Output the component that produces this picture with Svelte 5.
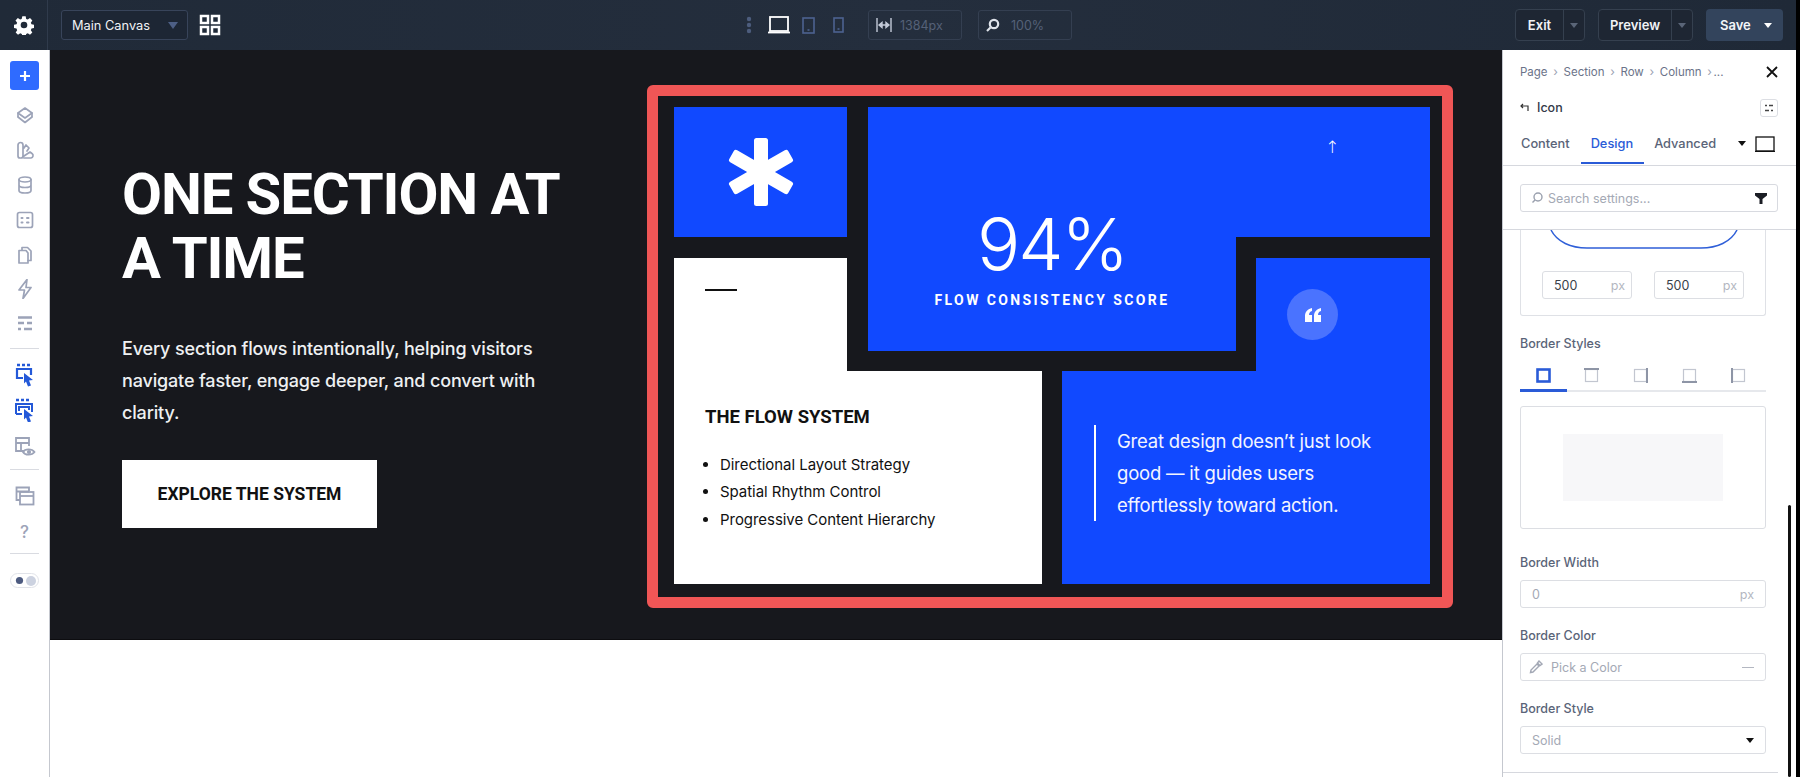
<script>
  const sideTop = ['layers', 'brush', 'db', 'form', 'copy', 'bolt', 'rows'];
  const listItems = ['Directional Layout Strategy', 'Spatial Rhythm Control', 'Progressive Content Hierarchy'];
  const borderTabs = ['all', 'top', 'right', 'bottom', 'left'];
</script>

<div class="app">
  <header class="topbar">
    <div class="gearcell">
      <svg width="20" height="20" viewBox="0 0 24 24" fill="#fff"><path fill-rule="evenodd" d="M10 1.500h4l.6 3.200 1.900.8 2.700-1.800 2.800 2.800-1.800 2.700.8 1.900 3.200.6v4l-3.200.6-.8 1.900 1.800 2.700-2.800 2.800-2.700-1.800-1.900.8-.6 3.200h-4l-.6-3.200-1.900-.8-2.700 1.800-2.800-2.800 1.800-2.700-.8-1.900-3.200-.6v-4l3.200-.6.8-1.900L1.800 6.500l2.800-2.800 2.700 1.800 1.900-.8zM12 8a4 4 0 1 0 0 8 4 4 0 0 0 0-8z"/></svg>
    </div>
    <div class="left">
      <div class="select"><span>Main Canvas</span><i class="tri"></i></div>
      <svg class="gridicon" width="22" height="22" viewBox="0 0 22 22" fill="none" stroke="#fff" stroke-width="2.500"><rect x="2" y="2" width="7" height="7"/><rect x="13" y="2" width="7" height="7"/><rect x="2" y="13" width="7" height="7"/><rect x="13" y="13" width="7" height="7"/></svg>
    </div>
    <div class="center">
      <svg class="dots" width="6" height="18" viewBox="0 0 6 18" fill="#4d5d7d"><circle cx="3" cy="3" r="2.200"/><circle cx="3" cy="9" r="2.200"/><circle cx="3" cy="15" r="2.200"/></svg>
      <svg width="22" height="18" viewBox="0 0 22 18" fill="none" stroke="#fff" stroke-width="1.800"><rect x="2" y="1" width="18" height="14"/><path d="M0 16.500h22"/></svg>
      <svg class="tablet" width="13" height="17" viewBox="0 0 13 17" fill="none" stroke="#4d6290" stroke-width="1.600"><rect x="1" y="1" width="11" height="15"/><path d="M5.500 13h2"/></svg>
      <svg class="phone" width="11" height="16" viewBox="0 0 11 16" fill="none" stroke="#4d6290" stroke-width="1.600"><rect x="1" y="1" width="9" height="14"/><path d="M4.500 12h2"/></svg>
      <div class="metric width">
        <svg width="16" height="14" viewBox="0 0 16 14" fill="none" stroke="#c3cad8" stroke-width="1.400"><path d="M1 0v14M15 0v14M3 7h10"/><path d="M3 7l3-2.500v5zM13 7l-3-2.500v5z" fill="#c3cad8"/></svg>
        <span>1384px</span>
      </div>
      <div class="metric zoom">
        <svg width="14" height="14" viewBox="0 0 14 14" fill="none" stroke="#dfe3ea" stroke-width="2.200"><circle cx="8" cy="6" r="4.200"/><path d="M4.500 9.500L1 13"/></svg>
        <span>100%</span>
      </div>
    </div>
    <div class="right">
      <div class="split exit"><span class="label">Exit</span><span class="arrow"><i class="tri small"></i></span></div>
      <div class="split preview"><span class="label">Preview</span><span class="arrow"><i class="tri small"></i></span></div>
      <div class="save"><span>Save</span><i class="tri small white"></i></div>
    </div>
  </header>

  <div class="body">
    <nav class="sidebar">
      <button class="add" aria-label="Add">
        <svg width="12" height="12" viewBox="0 0 12 12" stroke="#fff" stroke-width="2.200"><path d="M6 1v10M1 6h10"/></svg>
      </button>
      <div class="group first">
        {#each sideTop as icon}
          <svg class="sideicon" width="20" height="20" viewBox="0 0 20 20" fill="none" stroke="#9ca3b8" stroke-width="1.700" stroke-linejoin="round" stroke-linecap="round">
            {#if icon === 'layers'}
              <path d="M10 2l7 5-7 5-7-5zM3 11l7 5.500 7-5.500"/>
              <path d="M3 7v3.500M17 7v3.500"/>
            {:else if icon === 'brush'}
              <path d="M3 5a2.500 2.500 0 0 1 5 0v11a2 2 0 0 1-2 2H5a2 2 0 0 1-2-2zM9 8l2-3 3 3-2 3M9 18h7a2.500 2.500 0 0 0 1-4.500l-2-1.500-6 4"/>
            {:else if icon === 'db'}
              <ellipse cx="10" cy="4.500" rx="6" ry="2.500"/>
              <path d="M4 4.500v11c0 1.400 2.700 2.500 6 2.500s6-1.100 6-2.500v-11M4 10c0 1.400 2.700 2.500 6 2.500s6-1.100 6-2.500"/>
            {:else if icon === 'form'}
              <rect x="2.500" y="2.500" width="15" height="15" rx="2"/>
              <path d="M6.500 8h1M12 8h1.500M6.500 12.500h1M12 12.500h1.500" stroke-width="2"/>
            {:else if icon === 'copy'}
              <path d="M7 5V2.500h5.500L16 6v9.500h-3"/>
              <path d="M4 5.500h7l2 2.500v10H4z"/>
            {:else if icon === 'bolt'}
              <path d="M12 .5L4 11h5.500L8 19.500l8-11h-5z"/>
            {:else}
              <path d="M3 3.500h14M3 9h6M12 9h5M3 15h3M9 15h8" stroke-width="2.400" stroke-linecap="butt"/>
            {/if}
          </svg>
        {/each}
      </div>
      <hr />
      <div class="group tools">
        <svg width="20" height="24" viewBox="0 0 20 24" fill="none"><path d="M2 2h3M7 2h3M12 2h3" stroke="#2459d8" stroke-width="2.400"/><path d="M2 14V6h14v6M2 14v1h6" stroke="#2459d8" stroke-width="2.200"/><path d="M9 10l9 7-4 .5 2 5-3 1-2-5-2 2z" fill="#2459d8"/></svg>
        <svg width="22" height="24" viewBox="0 0 22 24" fill="none"><path d="M2 2h3M7 2h3M12 2h3" stroke="#2459d8" stroke-width="2.400"/><path d="M2 16V6h16v8M5 13V9h10v3M2 16h6" stroke="#2459d8" stroke-width="2"/><path d="M10 11l9 7-4 .5 2 5-3 1-2-5-2 2z" fill="#2459d8"/></svg>
        <svg class="eye" width="22" height="22" viewBox="0 0 22 22" fill="none" stroke="#9ca3b8" stroke-width="1.800"><path d="M10 15H2V2h13v8M2 7h13M7 7v8"/><path d="M9 16c2-3.500 9-3.500 11.500 0-2.500 3.500-9.500 3.500-11.500 0z"/><circle cx="15" cy="16" r="1.200" fill="#9ca3b8"/></svg>
      </div>
      <hr />
      <div class="group tools2">
        <svg width="20" height="20" viewBox="0 0 20 20" fill="none" stroke="#9ca3b8" stroke-width="1.800"><path d="M5 14H1.500V1.500H14V5M1.500 5.500H14"/><rect x="5" y="6" width="13.500" height="12.500"/><path d="M5 10h13.500"/></svg>
        <span class="help">?</span>
      </div>
      <hr />
      <div class="toggle">
        <svg width="9" height="9" viewBox="0 0 10 10"><circle cx="5" cy="5" r="4" fill="#4d5b80"/></svg>
        <i></i>
      </div>
    </nav>

    <main class="canvas">
      <section class="hero">
        <div class="copy">
          <h1>ONE SECTION AT A TIME</h1>
          <p>Every section flows intentionally, helping visitors navigate faster, engage deeper, and convert with clarity.</p>
          <a class="cta" href="#top">EXPLORE THE SYSTEM</a>
        </div>
        <div class="frame">
          <div class="grid">
            <div class="tile star">
              <svg width="68" height="68" viewBox="-34 -34 68 68" fill="#fff">
                <rect x="-7" y="-34" width="14" height="68" rx="2.500"/>
                <rect x="-7" y="-34" width="14" height="68" rx="2.500" transform="rotate(60)"/>
                <rect x="-7" y="-34" width="14" height="68" rx="2.500" transform="rotate(-60)"/>
              </svg>
            </div>
            <div class="tile stat">
              <span class="up">↑</span>
              <div class="num">94%</div>
              <div class="caption">FLOW CONSISTENCY SCORE</div>
            </div>
            <div class="tile info">
              <span class="dash"></span>
              <h2>THE FLOW SYSTEM</h2>
              <ul>
                {#each listItems as item}<li>{item}</li>{/each}
              </ul>
            </div>
            <div class="tile quote">
              <span class="qmark">
                <svg width="18" height="14" viewBox="0 0 18 14" fill="#fff"><path d="M8 0C4 1 1 3.500 1 8v6h7V7H5c0-2 1-3.500 3-4zM17 0c-4 1-7 3.500-7 8v6h7V7h-3c0-2 1-3.500 3-4z"/></svg>
              </span>
              <blockquote>Great design doesn’t just look good — it guides users effortlessly toward action.</blockquote>
            </div>
          </div>
        </div>
      </section>
    </main>

    <aside class="panel">
      <div class="crumbs">
        <span>Page</span><b>›</b><span>Section</span><b>›</b><span>Row</span><b>›</b><span>Column</span><b>›</b><span class="more">...</span>
        <svg class="close" width="12" height="12" viewBox="0 0 12 12" stroke="#111" stroke-width="1.800"><path d="M1 1l10 10M11 1L1 11"/></svg>
      </div>
      <div class="titlerow">
        <svg width="9" height="9" viewBox="0 0 9 9" fill="none" stroke="#333" stroke-width="1.200"><path d="M8 8V3H1M3 1L1 3l2 2"/></svg>
        <span>Icon</span>
        <span class="mini"><svg width="10" height="8" viewBox="0 0 10 8" stroke="#444" stroke-width="1.600"><path d="M1 1.500h2M5 1.500h4M1 6.500h4M7 6.500h2"/></svg></span>
      </div>
      <div class="tabs">
        <span>Content</span>
        <span class="active">Design</span>
        <span>Advanced</span>
        <i class="tri small black"></i>
        <svg class="monitor" width="20" height="16" viewBox="0 0 20 16" fill="none" stroke="#111" stroke-width="1.300"><rect x="1" y="1" width="18" height="14"/><path d="M0 15.500h20"/></svg>
      </div>
      <div class="searchwrap">
        <div class="search">
          <svg width="12" height="12" viewBox="0 0 12 12" fill="none" stroke="#9aa0ae" stroke-width="1.400"><circle cx="7" cy="5" r="4"/><path d="M4 8L1.500 10.500"/></svg>
          <span>Search settings...</span>
          <svg class="funnel" width="12" height="11" viewBox="0 0 12 11" fill="#1a1d24"><path d="M0 0h12v2.500L7.500 6v5h-3V6L0 2.500z"/></svg>
        </div>
      </div>
      <div class="scroll">
        <div class="radius">
          <svg class="arc" width="188" height="20" viewBox="0 0 188 20" fill="none" stroke="#2f5fd8" stroke-width="1.500"><path d="M1 0c6 12 20 18 36 18h114c16 0 30-6 36-18"/></svg>
          <div class="pair">
            <div class="field small"><span>500</span><em>px</em></div>
            <div class="field small"><span>500</span><em>px</em></div>
          </div>
        </div>
        <div class="lab styles">Border Styles</div>
        <div class="btabs">
          {#each borderTabs as t, i}
            <span class="btab" class:on={i === 0}>
              <svg width="15" height="15" viewBox="0 0 15 15" fill="none">
                {#if t === 'all'}
                  <rect x="1.500" y="1.500" width="12" height="12" stroke="#2a5bd7" stroke-width="2.600"/>
                {:else}
                  <rect x="1.500" y="1.500" width="12" height="12" stroke="#c2c6d0" stroke-width="1.200"/>
                  {#if t === 'top'}<path d="M0 1h15" stroke="#8e95a6" stroke-width="2"/>{/if}
                  {#if t === 'right'}<path d="M14 0v15" stroke="#8e95a6" stroke-width="2"/>{/if}
                  {#if t === 'bottom'}<path d="M0 14h15" stroke="#8e95a6" stroke-width="2"/>{/if}
                  {#if t === 'left'}<path d="M1 0v15" stroke="#8e95a6" stroke-width="2"/>{/if}
                {/if}
              </svg>
            </span>
          {/each}
        </div>
        <div class="preview-box"><div></div></div>
        <div class="lab">Border Width</div>
        <div class="field wide"><span class="ph">0</span><em>px</em></div>
        <div class="lab">Border Color</div>
        <div class="field wide color">
          <svg width="14" height="14" viewBox="0 0 14 14" fill="none" stroke="#a3a8b5" stroke-width="1.400"><path d="M1.500 12.500L2 10l6-6 2 2-6 6zM8 2.500l3.500 3.500M10 1l3 3-2 1.500-2.500-2.500z"/></svg>
          <span class="ph pick">Pick a Color</span><u></u>
        </div>
        <div class="lab">Border Style</div>
        <div class="field wide"><span class="ph">Solid</span><i class="tri small black"></i></div>
        <div class="endline"></div>
      </div>
      <div class="thumb"></div>
    </aside>
  </div>
</div>

<style>
  :global(body) { margin: 0; background: #000; }
  .app { width: 1796px; height: 777px; display: flex; flex-direction: column; overflow: hidden; font-family: Inter, "Liberation Sans", sans-serif; background: #fff; }
  .tri { display: block; width: 0; height: 0; border-left: 5px solid transparent; border-right: 5px solid transparent; border-top: 7px solid #4d5f85; }
  .tri.small { border-left-width: 4px; border-right-width: 4px; border-top-width: 5px; border-top-color: #5a6578; }
  .tri.white { border-top-color: #fff; }
  .tri.black { border-top-color: #111; }

  .topbar { height: 50px; flex: none; display: flex; align-items: center; background: linear-gradient(90deg, #202a38, #242e3d 50%, #1f2937); position: relative; }
  .gearcell { width: 48px; height: 50px; flex: none; display: flex; align-items: center; justify-content: center; border-right: 1px solid #303b4c; box-sizing: border-box; }
  .left { display: flex; align-items: center; margin-left: 13px; gap: 11px; }
  .select { width: 127px; height: 30px; box-sizing: border-box; border: 1px solid #38445a; border-radius: 3px; display: flex; align-items: center; justify-content: space-between; padding: 0 9px 0 10px; color: #f1f3f6; font-size: 12.800px; background: #1d2634; }
  .center { display: flex; align-items: center; margin-left: 525px; }
  .dots { margin-right: 16px; }
  .tablet { margin-left: 12px; }
  .phone { margin-left: 18px; }
  .metric { width: 94px; height: 30px; box-sizing: border-box; border: 1px solid #343f51; border-radius: 3px; display: flex; align-items: center; gap: 8px; padding-left: 7px; color: #556178; font-size: 12.500px; margin-left: 16px; }
  .metric.width { margin-left: 24px; }
  .metric.zoom { gap: 11px; }
  .right { margin-left: auto; margin-right: 13px; display: flex; gap: 13px; align-items: center; }
  .split { height: 32px; box-sizing: border-box; display: flex; border: 1px solid #35404f; border-radius: 4px; background: #1e2633; color: #f1f3f6; font-size: 13px; font-weight: 600; }
  .label { display: flex; align-items: center; justify-content: center; border-right: 1px solid #35404f; }
  .arrow { width: 20px; display: flex; align-items: center; justify-content: center; }
  .exit .label { width: 47px; }
  .preview .label { width: 72px; }
  .save { width: 77px; height: 32px; border-radius: 4px; background: #33445c; color: #f4f6f8; font-size: 13px; font-weight: 600; display: flex; align-items: center; justify-content: space-between; padding: 0 11px 0 14px; box-sizing: border-box; }

  .body { flex: 1; display: flex; min-height: 0; }
  .sidebar { width: 50px; flex: none; box-sizing: border-box; border-right: 1px solid #c5c8cf; background: #fff; display: flex; flex-direction: column; align-items: center; padding-top: 11px; }
  .add { width: 29px; height: 29px; padding: 0; border: 0; border-radius: 3px; background: #2f6bff; display: flex; align-items: center; justify-content: center; }
  .group { display: flex; flex-direction: column; align-items: center; }
  .first { gap: 14.800px; margin-top: 15.500px; }
  hr { width: 29px; height: 1px; border: 0; background: #d9dbe1; margin: 0; flex: none; }
  .first + hr { margin-top: 14px; }
  .tools { margin-top: 14px; gap: 11px; }
  .eye { margin-top: 3px; }
  .tools + hr { margin-top: 11px; }
  .tools2 { margin-top: 16px; gap: 16px; }
  .help { font-size: 17px; line-height: 20px; color: #9ca3b8; font-weight: 500; }
  .tools2 + hr { margin-top: 11px; }
  .toggle { margin-top: 19px; width: 29px; height: 15px; box-sizing: border-box; border: 1px solid #e1e3e9; border-radius: 8px; display: flex; align-items: center; justify-content: space-between; padding: 0 2px 0 4px; }
  .toggle i { width: 10px; height: 10px; border-radius: 50%; background: #ccd2e0; }

  .canvas { flex: 1; min-width: 0; background: #fff; }
  .hero { height: 590px; box-sizing: border-box; background: #17181d; display: flex; border-bottom: 1px solid #0d0d10; }
  .copy { width: 597px; flex: none; box-sizing: border-box; padding: 112px 0 0 72px; color: #fff; }
  h1 { margin: 0; font-family: Roboto, "Liberation Sans", sans-serif; font-weight: 700; font-size: 58px; line-height: 64px; width: 460px; letter-spacing: -1.100px; }
  .copy p { margin: 43px 0 0; width: 440px; font-size: 18px; line-height: 32px; font-weight: 500; color: #eef0f2; letter-spacing: -0.150px; }
  .cta { display: flex; align-items: center; justify-content: center; width: 255px; height: 68px; margin-top: 31px; background: #fff; color: #111; font-size: 17.500px; font-weight: 700; text-decoration: none; font-family: Roboto, sans-serif; }

  .frame { width: 806px; height: 523px; margin-top: 35px; box-sizing: border-box; border: 11px solid #f05656; border-radius: 6px; padding: 11px 12px 13px 16px; }
  .grid { display: grid; grid-template-columns: repeat(4, 1fr); grid-template-rows: 130px 93px 1fr; gap: 21px 20px; height: 100%; }
  .tile { box-sizing: border-box; position: relative; }
  .star { grid-area: 1 / 1; margin-right: 1px; background: #1149ff; display: flex; align-items: center; justify-content: center; }
  .stat { grid-area: 1 / 2 / 3 / 5; background: #1149ff; color: #fff; clip-path: polygon(0 0, 100% 0, 100% 130px, 368px 130px, 368px 100%, 0 100%); padding: 95px 0 0; width: 100%; }
  .up { position: absolute; left: 457px; top: 28px; font-size: 17px; line-height: 24px; font-family: "DejaVu Sans", sans-serif; font-weight: 300; }
  .num { width: 368px; text-align: center; font-family: Inter, sans-serif; font-weight: 300; font-size: 72px; line-height: 84px; letter-spacing: -2px; }
  .caption { width: 368px; text-align: center; font-family: Roboto, sans-serif; font-weight: 700; font-size: 14px; letter-spacing: 2.400px; line-height: 18px; margin-top: 5px; }
  .info { grid-area: 2 / 1 / 4 / 3; background: #fff; color: #111; clip-path: polygon(0 0, 173px 0, 173px 113px, 100% 113px, 100% 100%, 0 100%); padding: 31px 0 0 31px; }
  .dash { display: block; width: 32px; height: 2px; background: #111; }
  .info h2 { margin: 114px 0 0; font-family: Roboto, sans-serif; font-weight: 700; font-size: 18.500px; line-height: 24px; }
  .info ul { margin: 22px 0 0; padding: 0 0 0 15px; font-size: 15px; line-height: 27.400px; letter-spacing: -0.050px; }
  .quote { grid-area: 2 / 3 / 4 / 5; background: #1149ff; color: #fff; clip-path: polygon(194px 0, 100% 0, 100% 100%, 0 100%, 0 113px, 194px 113px); }
  .qmark { position: absolute; left: 225px; top: 31px; width: 51px; height: 51px; border-radius: 50%; background: #4a73ff; display: flex; align-items: center; justify-content: center; }
  blockquote { position: absolute; left: 32px; top: 167px; margin: 0; padding-left: 21px; border-left: 2px solid #fff; width: 263px; font-size: 18.500px; line-height: 32px; letter-spacing: -0.200px; color: #f3f5ff; }

  .panel { width: 294px; flex: none; box-sizing: border-box; border-left: 1px solid #c5c8cf; background: #fff; position: relative; display: flex; flex-direction: column; }
  .crumbs { height: 43px; flex: none; display: flex; align-items: center; gap: 5.700px; padding: 0 18px 0 17px; font-size: 11.500px; color: #6b7389; position: relative; }
  .crumbs b { font-weight: 400; color: #9aa1b2; font-size: 12px; }
  .crumbs .more { margin-left: -4px; }
  .close { margin-left: auto; }
  .titlerow { height: 29px; flex: none; display: flex; align-items: center; gap: 8px; padding: 0 18px 0 17px; font-size: 12.500px; font-weight: 500; color: #333a48; }
  .mini { margin-left: auto; width: 18px; height: 18px; box-sizing: border-box; border: 1px solid #dcdee3; border-radius: 3px; display: flex; align-items: center; justify-content: center; }
  .tabs { height: 44px; flex: none; box-sizing: border-box; display: flex; align-items: center; padding: 0 21px 0 18px; font-size: 12.800px; font-weight: 500; color: #5a6478; border-bottom: 1px solid #d6d8de; position: relative; gap: 21px; }
  .tabs .active { color: #2a5bd7; position: relative; }
  .tabs .active::after { content: ""; position: absolute; left: -10px; right: -11px; bottom: -13px; height: 2px; background: #2a5bd7; }
  .tabs .tri { margin-left: auto; margin-right: -12px; }
  .monitor { flex: none; }
  .searchwrap { height: 64px; flex: none; box-sizing: border-box; padding: 18px 18px 0 17px; border-bottom: 1px solid #d6d8de; }
  .search { height: 28px; box-sizing: border-box; border: 1px solid #d8dae0; border-radius: 3px; display: flex; align-items: center; padding: 0 10px; gap: 5px; font-size: 12.500px; color: #a4a9b5; }
  .funnel { margin-left: auto; }
  .scroll { flex: 1; padding: 0 30px 0 17px; overflow: hidden; }
  .radius { height: 86px; box-sizing: border-box; border: 1px solid #dfe1e6; border-top: 0; border-radius: 0 0 3px 3px; position: relative; padding-top: 41px; }
  .arc { position: absolute; left: 29px; top: 0; }
  .pair { display: flex; justify-content: center; gap: 22px; }
  .field { box-sizing: border-box; border: 1px solid #dcdee3; border-radius: 3px; display: flex; align-items: center; height: 28px; font-size: 12.500px; color: #3a3f4a; background: #fff; }
  .field.small { width: 90px; padding: 0 6px 0 11px; }
  .field em { margin-left: auto; font-style: normal; color: #b3b7c1; }
  .lab { font-size: 12.500px; line-height: 16px; color: #5a6478; font-weight: 500; margin-top: 20px; }
  .lab.styles { margin-top: 20px; }
  .btabs { display: flex; margin-top: 10px; height: 30px; box-sizing: border-box; border-bottom: 2px solid #e6e8ec; }
  .btab { width: 49px; height: 30px; flex: none; box-sizing: border-box; display: flex; align-items: flex-start; justify-content: center; padding-top: 6px; }
  .btab.on { width: 47px; border-bottom: 3px solid #2a5bd7; }
  .preview-box { height: 123px; margin: 14px 0 0; box-sizing: border-box; border: 1px solid #dcdee3; border-radius: 3px; display: flex; align-items: center; justify-content: center; }
  .preview-box + .lab { margin-top: 26px; }
  .preview-box div { width: 160px; height: 67px; background: #f7f7f9; }
  .field.wide { padding: 0 11px; margin-top: 9px; }
  .ph { color: #a4a9b5; }
  .color { gap: 8px; padding-left: 8px !important; }
  .color u { margin-left: auto; width: 12px; height: 1px; background: #b3b7c1; }
  .field.wide .tri { margin-left: auto; }
  .endline { height: 1px; background: #d6d8de; margin: 18px -12px 0 -17px; }
  .thumb { position: absolute; right: 5px; top: 455px; bottom: 0; width: 3px; border-radius: 2px; background: #111; }
</style>
